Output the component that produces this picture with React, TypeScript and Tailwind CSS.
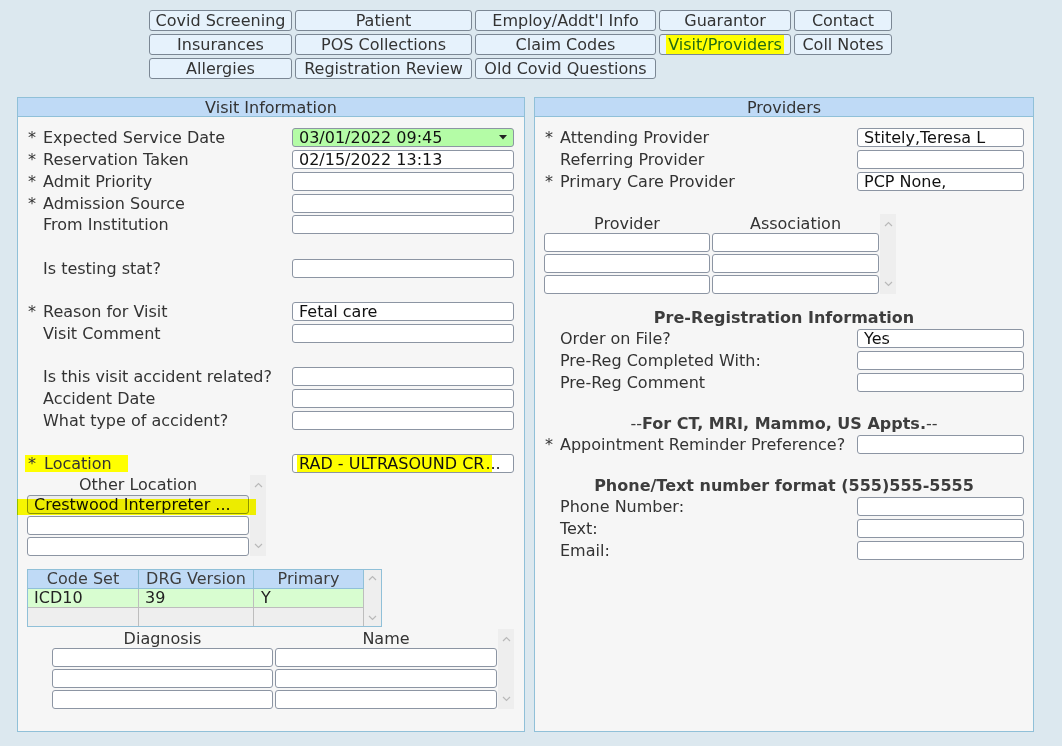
import React from "react";

function Chevron({ up }: { up?: boolean }) {
  return (
    <svg width="9" height="6" viewBox="0 0 9 6">
      <polyline
        points={up ? "1,5 4.5,1.5 8,5" : "1,1 4.5,4.5 8,1"}
        fill="none"
        stroke="#b9b9b9"
        strokeWidth="1.2"
      />
    </svg>
  );
}

function Scroll({ className = "" }: { className?: string }) {
  return (
    <div className={`flex flex-col items-center justify-between bg-[#eeeeee] py-[7px] ${className}`}>
      <Chevron up />
      <Chevron />
    </div>
  );
}

function Field({ w, value, className = "" }: { w: string; value?: React.ReactNode; className?: string }) {
  return (
    <div
      className={`h-[19px] ${w} shrink-0 overflow-hidden whitespace-nowrap rounded-[3px] border border-[#8c95a3] pl-[6px] text-[16px] leading-[17px] text-[#111] ${className || "bg-white"}`}
    >
      {value}
    </div>
  );
}

function LRow({ req, label, value }: { req?: boolean; label: string; value?: string }) {
  return (
    <div className="flex h-[21.73px] items-center">
      <span className="w-[16px] shrink-0 pl-[1px]">{req ? "*" : ""}</span>
      <span className="whitespace-nowrap">{label}</span>
      <Field w="w-[222px]" value={value} className="ml-auto bg-white" />
    </div>
  );
}

function RRow({ req, label, value }: { req?: boolean; label: string; value?: string }) {
  return (
    <div className="flex h-[22px] items-center">
      <span className="w-[16px] shrink-0 pl-[1px]">{req ? "*" : ""}</span>
      <span className="whitespace-nowrap">{label}</span>
      <Field w="w-[167px]" value={value} className="ml-auto bg-white" />
    </div>
  );
}

const Blank = () => <div className="h-[21.73px]" />;

function Tab({ label, active }: { label: string; active?: boolean }) {
  return (
    <div className="h-[21px] rounded-[3px] border border-[#7b8794] bg-[#e6f2fc] text-center text-[16px] leading-[19px] text-[#333]">
      {active ? <span className="bg-[#ffff00] px-[2px] text-[#236b14]">{label}</span> : label}
    </div>
  );
}

export default function App() {
  return (
    <div className="min-h-[746px] w-[1062px] bg-[#dce8ef] pt-[10px] font-['DejaVu_Sans',Verdana,sans-serif] text-[16px] text-[#333]">
      {/* Tabs */}
      <div className="ml-[149px] grid w-fit grid-cols-[143px_177px_181px_132px_98px] gap-x-[3px] gap-y-[3px]">
        <Tab label="Covid Screening" />
        <Tab label="Patient" />
        <Tab label="Employ/Addt'l Info" />
        <Tab label="Guarantor" />
        <Tab label="Contact" />
        <Tab label="Insurances" />
        <Tab label="POS Collections" />
        <Tab label="Claim Codes" />
        <Tab label="Visit/Providers" active />
        <Tab label="Coll Notes" />
        <Tab label="Allergies" />
        <Tab label="Registration Review" />
        <Tab label="Old Covid Questions" />
      </div>

      <div className="ml-[17px] mt-[18px] flex h-[635px] gap-[9px]">
        {/* Visit Information */}
        <div className="w-[508px] border border-[#90c0d8] bg-[#f6f6f6]">
          <div className="h-[19px] border-b border-[#90c0d8] bg-[#bfdaf6] text-center leading-[19px]">
            Visit Information
          </div>
          <div className="pl-[9px] pr-[10px] pt-[10px] leading-[19px]">
            <div className="flex h-[21.73px] items-center">
              <span className="w-[16px] shrink-0 pl-[1px]">*</span>
              <span>Expected Service Date</span>
              <div className="ml-auto flex h-[19px] w-[222px] items-center justify-between rounded-[3px] border border-[#8c95a3] bg-[#b4fca6] pl-[6px] pr-[6px] leading-[17px] text-[#111]">
                <span>03/01/2022 09:45</span>
                <svg width="8" height="5" viewBox="0 0 8 5">
                  <polygon points="0,0 8,0 4,4.5" fill="#222" />
                </svg>
              </div>
            </div>
            <LRow req label="Reservation Taken" value="02/15/2022 13:13" />
            <LRow req label="Admit Priority" />
            <LRow req label="Admission Source" />
            <LRow label="From Institution" />
            <Blank />
            <LRow label="Is testing stat?" />
            <Blank />
            <LRow req label="Reason for Visit" value="Fetal care" />
            <LRow label="Visit Comment" />
            <Blank />
            <LRow label="Is this visit accident related?" />
            <LRow label="Accident Date" />
            <LRow label="What type of accident?" />
            <Blank />
            <div className="flex h-[21.73px] items-center">
              <span className="-ml-[2px] flex h-[17px] items-center bg-[#ffff00] pl-[3px] pr-[16px] leading-[17px]">
                <span className="w-[16px] shrink-0">*</span>
                <span>Location</span>
              </span>
              <div className="ml-auto h-[19px] w-[222px] overflow-hidden whitespace-nowrap rounded-[3px] border border-[#8c95a3] bg-white pl-[4px] leading-[17px] text-[#111]">
                <span className="bg-[#ffff00] pl-[2px] pr-[8px]">RAD - ULTRASOUND CR</span>
                <span className="-ml-[7px]">...</span>
              </div>
            </div>

            {/* Other Location */}
            <div className="flex">
              <div className="w-[222px]">
                <div className="h-[20px] text-center leading-[20px]">Other Location</div>
                <div className="flex flex-col gap-[2px]">
                  <div className="relative">
                    <Field w="w-[222px]" value="Crestwood Interpreter ..." className="bg-[#ececec]" />
                    <div className="pointer-events-none absolute bottom-[-1px] left-[-10px] right-[-7px] top-[4px] bg-[#ffff00] mix-blend-multiply" />
                  </div>
                  <Field w="w-[222px]" />
                  <Field w="w-[222px]" />
                </div>
              </div>
              <Scroll className="ml-[1px] w-[16px]" />
            </div>

            {/* Code set table */}
            <div className="mt-[13px] flex w-[355px] border border-[#90c0d8] leading-[18px]">
              <div className="w-[336px]">
                <div className="grid h-[19px] grid-cols-[111px_115px_110px] border-b border-[#90c0d8] bg-[#bfdaf6] text-center text-[#3d3d3d]">
                  <div className="border-r border-[#90c0d8]">Code Set</div>
                  <div className="border-r border-[#90c0d8]">DRG Version</div>
                  <div className="border-r border-[#90c0d8]">Primary</div>
                </div>
                <div className="grid h-[19px] grid-cols-[111px_115px_110px] border-b border-[#bdbdbd] bg-[#d8fdd0] text-[#222]">
                  <div className="border-r border-[#bdbdbd] pl-[6px]">ICD10</div>
                  <div className="border-r border-[#bdbdbd] pl-[6px]">39</div>
                  <div className="border-r border-[#bdbdbd] pl-[7px]">Y</div>
                </div>
                <div className="grid h-[18px] grid-cols-[111px_115px_110px] bg-[#eeeeee]">
                  <div className="border-r border-[#bdbdbd]" />
                  <div className="border-r border-[#bdbdbd]" />
                  <div className="border-r border-[#bdbdbd]" />
                </div>
              </div>
              <Scroll className="w-[17px] !py-[5px]" />
            </div>

            {/* Diagnosis */}
            <div className="ml-[25px] mt-[2px] flex">
              <div>
                <div className="grid h-[19px] grid-cols-[221px_222px] gap-x-[2px] text-center leading-[19px]">
                  <div>Diagnosis</div>
                  <div>Name</div>
                </div>
                <div className="grid grid-cols-[221px_222px] gap-[2px]">
                  <Field w="w-[221px]" />
                  <Field w="w-[222px]" />
                  <Field w="w-[221px]" />
                  <Field w="w-[222px]" />
                  <Field w="w-[221px]" />
                  <Field w="w-[222px]" />
                </div>
              </div>
              <Scroll className="ml-[1px] w-[16px]" />
            </div>
          </div>
        </div>

        {/* Providers */}
        <div className="w-[500px] border border-[#90c0d8] bg-[#f6f6f6]">
          <div className="h-[19px] border-b border-[#90c0d8] bg-[#bfdaf6] text-center leading-[19px]">
            Providers
          </div>
          <div className="pl-[9px] pr-[9px] pt-[9px] leading-[19px]">
            <RRow req label="Attending Provider" value="Stitely,Teresa L" />
            <RRow label="Referring Provider" />
            <RRow req label="Primary Care Provider" value="PCP None," />
            <div className="h-[22px]" />

            <div className="flex">
              <div>
                <div className="grid h-[19px] grid-cols-[166px_167px] gap-x-[2px] text-center leading-[19px]">
                  <div>Provider</div>
                  <div>Association</div>
                </div>
                <div className="grid grid-cols-[166px_167px] gap-[2px]">
                  <Field w="w-[166px]" />
                  <Field w="w-[167px]" />
                  <Field w="w-[166px]" />
                  <Field w="w-[167px]" />
                  <Field w="w-[166px]" />
                  <Field w="w-[167px]" />
                </div>
              </div>
              <Scroll className="ml-[1px] w-[16px]" />
            </div>

            <div className="mt-[15px] h-[18px] text-center font-bold leading-[18px] text-[#3d3d3d]">
              Pre-Registration Information
            </div>
            <RRow label="Order on File?" value="Yes" />
            <RRow label="Pre-Reg Completed With:" />
            <RRow label="Pre-Reg Comment" />
            <div className="h-[22px]" />
            <div className="h-[18px] text-center leading-[18px] text-[#3d3d3d]">
              --<span className="font-bold">For CT, MRI, Mammo, US Appts.</span>--
            </div>
            <RRow req label="Appointment Reminder Preference?" />
            <div className="h-[22px]" />
            <div className="h-[18px] text-center font-bold leading-[18px] text-[#3d3d3d]">
              Phone/Text number format (555)555-5555
            </div>
            <RRow label="Phone Number:" />
            <RRow label="Text:" />
            <RRow label="Email:" />
          </div>
        </div>
      </div>
    </div>
  );
}
